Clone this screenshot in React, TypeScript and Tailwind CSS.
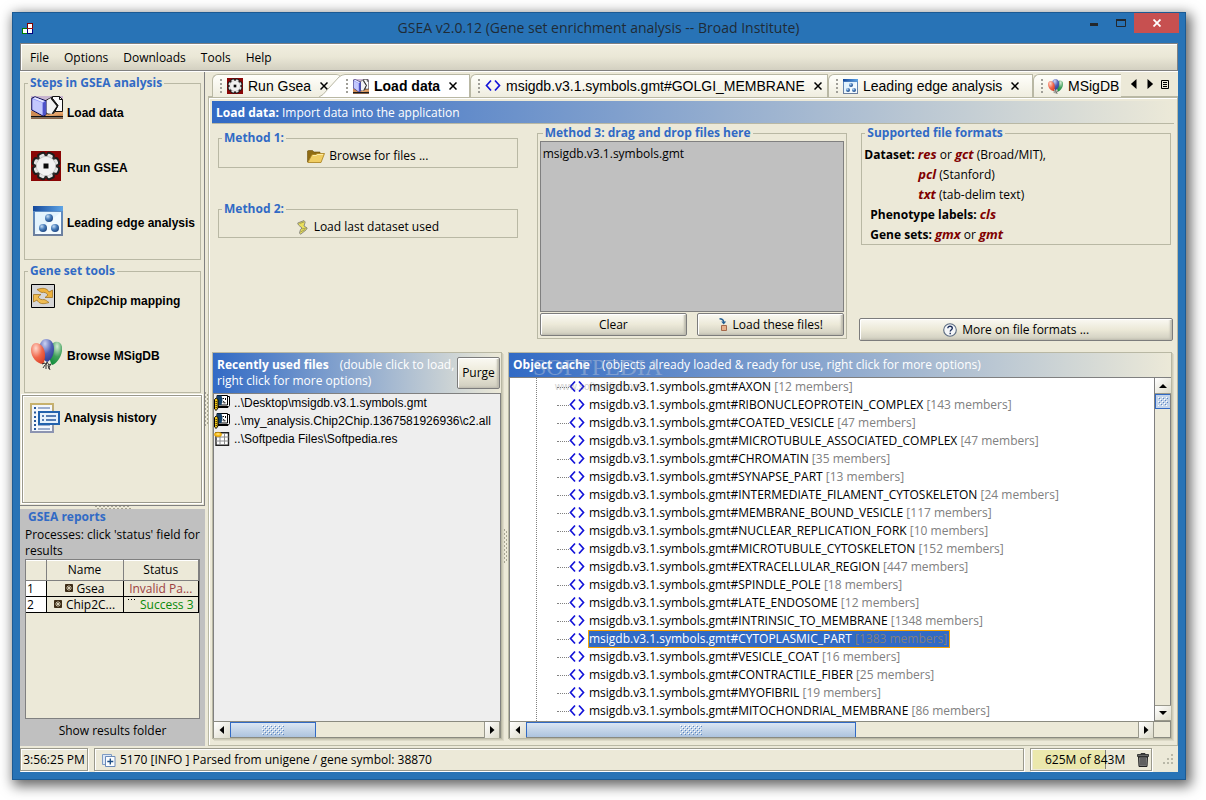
import { Fragment, type ReactNode } from "react";

const UI = "font-['Open_Sans','Noto_Sans',sans-serif]";
const ARIAL = "font-['Liberation_Sans',Arial,sans-serif]";

/* ---------- icons ---------- */

function AppIcon() {
  return (
    <svg width="11" height="11" viewBox="0 0 11 11" shapeRendering="crispEdges">
      <path d="M5.5.5h5v5h-5z" fill="#fff" stroke="#7f0000" />
      <path d="M.5 5.500h5v5h-5z" fill="#fff" stroke="#007f00" />
      <path d="M5.500 5.500h5v5h-5z" fill="#fff" stroke="#00007f" />
      <path d="M5 5.500h6" stroke="#a01010" />
    </svg>
  );
}

function BooksIcon({ width = 32, height = 23 }: { width?: number; height?: number }) {
  return (
    <svg width={width} height={height} viewBox="0 0 32 23" preserveAspectRatio="none" className="shrink-0">
      <path d="M0 0h32v16H0z" fill="#c9b6cf" />
      <path d="M0 15h32v5H0z" fill="#e5a56c" />
      <path d="M0 15l3 1 9 4h8l12-2v2H0z" fill="#b9713a" opacity=".5" />
      <path d="M0 20h32v1.500H0z" fill="#111" />
      <path d="M0 21.500h32V23H0z" fill="#8a6448" />
      <path d="M14 5l7-4 6 8-4 8-6 1-3-2z" fill="#d5d5d5" stroke="#222" />
      <path d="M21.500.5h7l3 3v12h-7.500l3-6-5.500-7z" fill="#fafafa" stroke="#111" />
      <path d="M28.500.5v3h3" fill="none" stroke="#111" />
      <path d="M15.500 17V5l4-3 7 8-6 8z" fill="#f3f3f3" />
      <path d="M20 2l6.500 8-5 7.500" fill="none" stroke="#111" strokeWidth="1.300" />
      <path d="M.8 2.200L4 .8l11 4v14l-3 1.200L.8 14z" fill="#8e93f5" stroke="#0d0d50" />
      <path d="M1.500 3l10 3.800V19L1.500 13.500z" fill="#c3c8fd" />
      <path d="M11.800 7L15 5v13.500l-3.200 1.300z" fill="#4d53c8" />
      <path d="M2 2.300L4.200 1.300 13.600 5l-2 1.200z" fill="#e8eaff" />
    </svg>
  );
}

function GearIcon({ size = 30 }: { size?: number }) {
  const teeth = [22.5, 67.5, 112.5, 157.5, 202.5, 247.5, 292.5, 337.5];
  return (
    <svg width={size} height={size} viewBox="0 0 30 30" className="shrink-0">
      <path d="M0 0h30v30H0z" fill="#8a0505" />
      {teeth.map((a) => (
        <rect key={a} x="10.500" y=".5" width="9" height="9" rx="3" fill="#1c1c1c" transform={`rotate(${a} 15 15)`} />
      ))}
      <circle cx="15" cy="15" r="12" fill="#2b2b2b" />
      {teeth.map((a) => (
        <rect key={a} x="12.300" y="2.500" width="5.400" height="6" rx="1.500" fill="#e4e4e4" transform={`rotate(${a} 15 15)`} />
      ))}
      <circle cx="15" cy="15" r="10" fill="#bdbdbd" />
      <circle cx="15" cy="15" r="9.300" fill="#f1f1f1" />
      <path d="M12.500 12.500h5v5h-5z" fill="#0a0a0a" />
    </svg>
  );
}

function LeadingEdgeIcon({ size = 30 }: { size?: number }) {
  return (
    <svg width={size} height={size} viewBox="0 0 30 30" className="shrink-0">
      <defs>
        <linearGradient id="leFrame" x1="0" y1="0" x2="0" y2="1">
          <stop offset="0" stopColor="#5a8fcc" />
          <stop offset="1" stopColor="#6d7f9c" />
        </linearGradient>
        <linearGradient id="leBar" x1="0" y1="0" x2="1" y2="0">
          <stop offset="0" stopColor="#14489a" />
          <stop offset="1" stopColor="#5fa5e6" />
        </linearGradient>
        <radialGradient id="leBall" cx=".35" cy=".3" r=".8">
          <stop offset="0" stopColor="#c4dcf3" />
          <stop offset=".45" stopColor="#4b80bd" />
          <stop offset="1" stopColor="#163d78" />
        </radialGradient>
      </defs>
      <path d="M0 0h30v30H0z" fill="url(#leFrame)" />
      <path d="M0 0h30v5H0z" fill="url(#leBar)" />
      <path d="M2 6h26v22H2z" fill="#e3f3fd" />
      <path d="M28 6v22H2z" fill="#f3fbff" />
      <circle cx="16" cy="12" r="4" fill="url(#leBall)" />
      <circle cx="10" cy="22" r="4" fill="url(#leBall)" />
      <circle cx="22" cy="22" r="4" fill="url(#leBall)" />
    </svg>
  );
}

function ChipIcon() {
  return (
    <svg width="24" height="24" viewBox="0 0 24 24">
      <path d="M.5.5h23v23H.5z" fill="#d6d6d6" stroke="#000" />
      <path d="M6 5.500c6-2 10-1.500 12 2.500l3.500-2v7.500H14l3-2.500c-1.500-2.500-4-3-6-2.500-2-.5-3.500-2-5-3z" fill="#eeb23c" stroke="#9c6c14" strokeWidth=".7" />
      <path d="M18 18.500c-6 2-10 1.500-12-2.500l-3.500 2v-7.500H10L7 13c1.500 2.500 4 3 6 2.500 2 .5 3.500 2 5 3z" fill="#f0bd52" stroke="#9c6c14" strokeWidth=".7" />
    </svg>
  );
}

function BalloonsIcon({ size = 31 }: { size?: number }) {
  return (
    <svg width={size} height={size} viewBox="0 0 31 31" className="shrink-0">
      <defs>
        <radialGradient id="bRed" cx=".35" cy=".25" r=".9">
          <stop offset="0" stopColor="#ffd9cc" />
          <stop offset=".5" stopColor="#f0664a" />
          <stop offset="1" stopColor="#d53c22" />
        </radialGradient>
        <radialGradient id="bBlue" cx=".4" cy=".2" r=".9">
          <stop offset="0" stopColor="#ccd2f2" />
          <stop offset=".5" stopColor="#4f5fb4" />
          <stop offset="1" stopColor="#26378c" />
        </radialGradient>
        <radialGradient id="bGreen" cx=".6" cy=".2" r=".9">
          <stop offset="0" stopColor="#d6ecd6" />
          <stop offset=".5" stopColor="#3fa05a" />
          <stop offset="1" stopColor="#0c8a38" />
        </radialGradient>
      </defs>
      <path d="M24 3c5-1 8 3 7 9-1 7-6 13-10 14-2-3-3-8-2-13 0-6 2-9 5-10z" fill="url(#bGreen)" />
      <path d="M15 0c5 0 8 4 8 10 0 7-4 12-7 13-4-2-8-7-8-13 0-5 3-10 7-10z" fill="url(#bBlue)" />
      <path d="M5 4c5 0 9 5 9 12 0 4-1 8-2 9C6 25 0 18 0 11c0-4 2-7 5-7z" fill="url(#bRed)" />
      <path d="M11 25l3-1 1 2 1-3 2 3 2-1-2 3 1 3M14 26l-2 3M15 26v4M17 26l1 4" fill="none" stroke="#333" strokeWidth="1" />
    </svg>
  );
}

function HistoryIcon() {
  return (
    <svg width="30" height="30" viewBox="0 0 30 30">
      <defs>
        <linearGradient id="hFrame" x1="0" y1="0" x2="0" y2="1">
          <stop offset="0" stopColor="#c9b26a" />
          <stop offset="1" stopColor="#8a93b4" />
        </linearGradient>
      </defs>
      <path d="M0 0h24v30H0z" fill="url(#hFrame)" />
      <path d="M2 2h20v26H2z" fill="#f3f7fc" />
      <path d="M4 5h2M4 9.500h2M4 14h2M4 18h2M4 22h2M4 26h2" stroke="#27579b" strokeWidth="2" />
      <path d="M8 5h12M8 9.500h8M8 22h12M8 26h12" stroke="#8097be" strokeWidth="1.500" />
      <path d="M9 9h20v12H9z" fill="#e6f1fb" stroke="#2262ad" strokeWidth="2" />
      <path d="M12 13h2M12 17h2M16 13h10M16 17h10" stroke="#27579b" strokeWidth="1.500" />
    </svg>
  );
}

function AngleIcon({ size = 16 }: { size?: number }) {
  return (
    <svg width={size} height={size} viewBox="0 0 16 16" className="shrink-0">
      <path d="M6 2.500L1.500 7.500l4.500 5M10 2.500l4.500 5-4.500 5" fill="none" stroke="#1414d8" strokeWidth="1.700" />
    </svg>
  );
}

function FolderIcon() {
  return (
    <svg width="18" height="13" viewBox="0 0 18 13">
      <path d="M.5 12V1L1.500.5h4L7 2h6v3H5z" fill="#8f6c14" stroke="#6d500c" strokeWidth=".6" />
      <path d="M.8 12.500L5 4.500h4l1-1h7.500L14 12.500z" fill="#f0cd62" stroke="#a77f1c" strokeWidth=".8" />
      <path d="M6 5.500h3.500l1-1H16" fill="none" stroke="#fbeaa6" />
    </svg>
  );
}

function ScrollIcon() {
  return (
    <svg width="11" height="15" viewBox="0 0 11 15">
      <path d="M.7 3L7 .6 8.200 2 7 6l3.200 2L9 10 3.500 14.300 2.500 13l1-3.500L5 8 1.500 5z" fill="#e9df5c" stroke="#777" strokeWidth=".8" />
      <path d="M2.500 3.500L7 2M4.500 9l5-1M3.500 12L8 9.500" stroke="#8d8a4c" strokeWidth=".7" />
    </svg>
  );
}

function LoadArrowIcon() {
  return (
    <svg width="9" height="13" viewBox="0 0 9 13">
      <path d="M.5.8c2.500 0 4 1 4.200 3.200" fill="none" stroke="#245f93" strokeWidth="1.400" />
      <path d="M2.200 3.600h5L4.700 6.600z" fill="#245f93" />
      <path d="M2.500 7.500h5v5h-5z" fill="#e5b08a" stroke="#a5684a" />
    </svg>
  );
}

function HelpIcon() {
  return (
    <svg width="14" height="14" viewBox="0 0 14 14">
      <circle cx="7" cy="7" r="6.300" fill="#f4f6f8" stroke="#5b6b80" strokeWidth="1.100" />
      <path d="M4.800 5.300c0-2.800 4.500-2.600 4.500-.1 0 1.500-2.100 1.600-2.100 3.300M7.200 9.800v1.500" fill="none" stroke="#1c2f5c" strokeWidth="1.400" />
    </svg>
  );
}

function BookFileIcon() {
  return (
    <svg width="16" height="16" viewBox="0 0 16 16" className="shrink-0">
      <path d="M4 1.500h11.500v9l-1.500 2H4z" fill="#fff" stroke="#000" />
      <path d="M3 .5h10.500v9.500H3z" fill="#fff" stroke="#000" />
      <path d="M3 .5h4.500L8.500 5l-1 5H3z" fill="#123f66" />
      <path d="M8.500 3.500h1.500M11.500 3v2M9 7.500l1-1.500M9.500 7.800h2" fill="none" stroke="#000" />
      <path d="M4 11.500h10" stroke="#000" />
      <path d="M.5 4.500L2.200 3 4 4.500V13l-1.800 2.500L.5 14z" fill="#f4c916" stroke="#000" />
      <path d="M1.500 6.500h1.500M1.500 8.500h1.500M1.500 10.500h1.500M1.500 12.500h1.500" stroke="#5b4700" />
    </svg>
  );
}

function GridFileIcon() {
  return (
    <svg width="16" height="16" viewBox="0 0 16 16" className="shrink-0">
      <path d="M2 1.700h12.500v12.500H2z" fill="#fff" stroke="#222" strokeWidth="1.400" />
      <path d="M2 6h12.500M2 10h12.500M6 2v12M10.500 2v12" stroke="#8a8a8a" />
      <ellipse cx="4" cy="3.500" rx="3.700" ry="2.200" fill="#f9bc14" stroke="#c88c00" strokeWidth=".6" />
      <path d="M2.500 3h3" stroke="#fff3b0" />
    </svg>
  );
}

function StarBoxIcon() {
  return (
    <svg width="8" height="8" viewBox="0 0 8 8" className="shrink-0">
      <path d="M.5.5h7v7h-7z" fill="#3d2c16" stroke="#3d2c16" />
      <path d="M4 1v6M1 4h6M2 2l4 4M6 2L2 6" stroke="#e3dcc4" strokeWidth=".8" />
    </svg>
  );
}

function PlusPageIcon() {
  return (
    <svg width="14" height="13" viewBox="0 0 14 13" className="shrink-0">
      <path d="M.5.5h9v10h-9z" fill="#dfe9f6" stroke="#7f9cc4" />
      <path d="M3.500 2.500h9.500v10H3.500z" fill="#fbfdff" stroke="#6a8ab8" />
      <path d="M8.300 4.500v6M5.300 7.500h6" stroke="#1f4f86" strokeWidth="1.400" />
    </svg>
  );
}

function TrashIcon() {
  return (
    <svg width="12" height="14" viewBox="0 0 12 14">
      <path d="M4 1.500V.5h4v1" fill="none" stroke="#333" />
      <path d="M.5 1.500h11v2H.5z" fill="#666" stroke="#222" strokeWidth=".8" />
      <path d="M1.500 4h9l-.5 9.500H2z" fill="#8c8c8c" stroke="#222" />
      <path d="M4 5v7.500M6 5v7.500M8 5v7.500" stroke="#2a2a2a" strokeWidth=".9" />
    </svg>
  );
}

function CloseGlyph() {
  return (
    <svg width="8" height="8" viewBox="0 0 8 8">
      <path d="M.5.5l7 7M7.500.5l-7 7" stroke="#000" strokeWidth="1.500" />
    </svg>
  );
}

function Arrow({ dir, big }: { dir: "left" | "right" | "up" | "down"; big?: boolean }) {
  const d = {
    left: "M6 0v8L1.500 4z",
    right: "M2 0v8l4.500-4z",
    up: "M0 6h8L4 2z",
    down: "M0 2h8L4 6z",
  }[dir];
  return (
    <svg width={big ? 10 : 8} height={big ? 10 : 8} viewBox="0 0 8 8">
      <path d={d} fill="#000" />
    </svg>
  );
}

function ThumbDots({ width = 22, height = 10 }: { width?: number; height?: number }) {
  return (
    <svg width={width} height={height}>
      <defs>
        <pattern id="thumbDots" width="4" height="4" patternUnits="userSpaceOnUse">
          <path d="M0 0h1v1H0zM2 2h1v1H2z" fill="#fff" />
          <path d="M1 1h1v1H1zM3 3h1v1H3z" fill="#5b86c4" />
        </pattern>
      </defs>
      <rect width={width} height={height} fill="url(#thumbDots)" />
    </svg>
  );
}

function Grip({ vertical }: { vertical?: boolean }) {
  return vertical ? (
    <svg width="3" height="34" className="shrink-0">
      <path d="M.5 0v34M2.500 2v32" stroke="#a5a391" strokeDasharray="2 2" />
    </svg>
  ) : (
    <svg width="36" height="3" className="shrink-0">
      <path d="M0 .5h36M2 2.500h34" stroke="#a5a391" strokeDasharray="2 2" />
    </svg>
  );
}

/* ---------- shared parts ---------- */

function Group({ title, className = "", children }: { title: string; className?: string; children: ReactNode }) {
  return (
    <fieldset className={`min-w-0 border border-[#b9b8a4] ${className}`}>
      <legend className="ml-[3px] px-[2px] text-[12px] leading-4 font-bold text-[#316ac5]">{title}</legend>
      {children}
    </fieldset>
  );
}

const metalButton =
  "flex items-center justify-center rounded-[2px] border border-[#7c7c7c] bg-linear-to-b/srgb from-[#faf9f3] via-[#ece9d8] to-[#cfcdbf] shadow-[inset_1px_1px_0_#fff,inset_-2px_-1px_2px_#bdbbae]";

const scrollButton =
  "flex h-4 w-4 shrink-0 items-center justify-center border border-[#9a998c] bg-linear-to-br/srgb from-white to-[#dcdac9]";

function HScroll({ thumb, tail }: { thumb: string; tail?: boolean }) {
  return (
    <div className="flex h-[17px] shrink-0 border border-[#8a8a80] bg-[#ece9d8]">
      <button aria-label="Scroll left" className={`${scrollButton} border-0`}>
        <Arrow dir="left" />
      </button>
      <div className="flex flex-1">
        <div className={`flex items-center justify-center border border-b-0 border-[#316ac5] bg-linear-to-b/srgb from-[#dbe6f3] to-[#adc3de] ${thumb}`}>
          <ThumbDots />
        </div>
      </div>
      <button aria-label="Scroll right" className={`${scrollButton} border-y-0`}>
        <Arrow dir="right" />
      </button>
      {tail && <div className="w-4 shrink-0" />}
    </div>
  );
}

function SideItem({ icon, label }: { icon: ReactNode; label: string }) {
  return (
    <button className="flex h-[55px] items-start pl-[6px] text-left">
      <span className="flex h-8 w-[36px] shrink-0 items-start">{icon}</span>
      <span className={`leading-[34px] font-bold whitespace-nowrap ${ARIAL}`}>{label}</span>
    </button>
  );
}

/* ---------- window parts ---------- */

function TitleBar() {
  return (
    <header className="flex h-[30px] shrink-0 items-center pr-[6px] pl-[9px]">
      <AppIcon />
      <h1 className="flex-1 pl-[84px] text-center text-[14px] leading-5 text-[#1f2b36]">
        GSEA v2.0.12 (Gene set enrichment analysis -- Broad Institute)
      </h1>
      <div className="flex h-full items-start">
        <button aria-label="Minimize" className="flex h-[20px] w-[27px] items-center justify-center">
          <svg width="8" height="8">
            <path d="M0 5.500h8" stroke="#23272c" strokeWidth="3" />
          </svg>
        </button>
        <button aria-label="Maximize" className="flex h-[20px] w-[27px] items-center justify-center">
          <svg width="10" height="8">
            <path d="M.5 0v7.500h9V0" fill="none" stroke="#23272c" />
            <path d="M0 1h10" stroke="#23272c" strokeWidth="2" />
          </svg>
        </button>
        <button aria-label="Close" className="flex h-[20px] w-[45px] items-center justify-center bg-[#c75050]">
          <svg width="8" height="8" viewBox="0 0 8 8">
            <path d="M.5.5l7 7M7.500.5l-7 7" stroke="#fff" strokeWidth="1.800" />
          </svg>
        </button>
      </div>
    </header>
  );
}

function MenuBar() {
  return (
    <nav className="flex h-[28px] shrink-0 items-center gap-[15px] border border-[#808080] bg-linear-to-b/srgb from-[#f1eee0] via-[#eae7d6] to-[#d3d0c1] pt-px pl-[9px] shadow-[inset_1px_1px_0_#fff]">
      {["File", "Options", "Downloads", "Tools", "Help"].map((m) => (
        <button key={m}>{m}</button>
      ))}
    </nav>
  );
}

const runs = [
  { n: 1, name: "Gsea", status: "Invalid Pa...", tone: "text-[#9c4040]" },
  { n: 2, name: "Chip2C...", status: "Success 3", tone: "text-[#0a8a0a]" },
];

function Reports() {
  return (
    <section className="flex flex-1 flex-col bg-[#c0c0c0] px-[5px] pb-[7px]">
      <h2 className="pl-[3px] font-bold text-[#316ac5]">GSEA reports</h2>
      <p className="pt-[2px]">Processes: click 'status' field for results</p>
      <div className="flex-1 border border-[#808080] bg-[#ece9d8]">
        <table className="w-full table-fixed border-collapse text-center">
          <thead>
            <tr className="h-[20px] border-b border-[#808080] shadow-[inset_0_1px_0_#fff]">
              <th className="w-[20px] border-r border-[#808080]" />
              <th className="w-[77px] border-r border-[#808080] font-normal">Name</th>
              <th className="border-r border-[#808080] font-normal">Status</th>
            </tr>
          </thead>
          <tbody>
            {runs.map((r) => (
              <tr key={r.n} className="h-4 leading-[15px]">
                <td className="border-r border-b border-black bg-white pl-px text-left">{r.n}</td>
                <td className="border-r border-b border-black whitespace-nowrap">
                  <span className="flex items-center justify-center gap-1">
                    <StarBoxIcon />
                    {r.name}
                  </span>
                </td>
                <td className={`border-r border-b border-black whitespace-nowrap ${r.tone}`}>
                  <span className="flex justify-center gap-1">
                    {r.n === 2 && (
                      <svg width="8" height="4">
                        <path d="M0 2.500h8" stroke="#000" strokeDasharray="1 2" />
                      </svg>
                    )}
                    {r.status}
                  </span>
                </td>
              </tr>
            ))}
          </tbody>
        </table>
      </div>
      <button className="mt-1 h-4 w-full">Show results folder</button>
    </section>
  );
}

function Sidebar() {
  return (
    <aside className="flex w-[185px] shrink-0 flex-col">
      <div className="flex flex-col gap-[2px] border-r border-b border-[#808080] px-[2px] pt-[3px] pb-[2px]">
        <div className="flex flex-col gap-[3px] px-[2px]">
          <Group title="Steps in GSEA analysis" className="h-[185px] w-[177px]">
            <div className="flex flex-col pt-[5px]">
              <SideItem icon={<BooksIcon />} label="Load data" />
              <SideItem icon={<GearIcon />} label="Run GSEA" />
              <SideItem
                icon={
                  <span className="pl-[2px]">
                    <LeadingEdgeIcon />
                  </span>
                }
                label="Leading edge analysis"
              />
            </div>
          </Group>
          <Group title="Gene set tools" className="h-[130px] w-[177px]">
            <div className="flex flex-col pt-[5px]">
              <SideItem icon={<ChipIcon />} label="Chip2Chip mapping" />
              <SideItem icon={<BalloonsIcon />} label="Browse MSigDB" />
            </div>
          </Group>
        </div>
        <div className="h-[108px] border border-[#9a998c] bg-[#ece9d8] px-[7px] py-[7px] shadow-[inset_1px_1px_0_#fff,0_0_0_1px_#fff]">
          <button className="flex items-center gap-1">
            <HistoryIcon />
            <span className={`font-bold ${ARIAL}`}>Analysis history</span>
          </button>
        </div>
      </div>
      <div className="flex h-[3px] justify-center">
        <Grip />
      </div>
      <Reports />
    </aside>
  );
}

function TabBody({ icon, label, close = true, bold }: { icon: ReactNode; label: string; close?: boolean; bold?: boolean }) {
  return (
    <>
      <svg width="2" height="14" className="shrink-0">
        <path d="M1 0v14" stroke="#a09f98" strokeWidth="2" strokeDasharray="2 2" />
      </svg>
      {icon}
      <span className={`text-[14px] leading-5 whitespace-nowrap ${bold ? "font-bold" : ""}`}>{label}</span>
      {close && (
        <span className="pl-[4px]">
          <CloseGlyph />
        </span>
      )}
    </>
  );
}

const tabBase = "flex h-[23px] items-center gap-[5px] rounded-tl-[6px] border border-b-0 border-[#b9b8a4]";
const tabIdle = "bg-linear-to-b/srgb from-[#fffffb] to-[#efeddf]";

function Tabs() {
  return (
    <div className={`flex h-[25px] shrink-0 items-start border-b border-[#b9b8a4] pl-1 ${ARIAL}`}>
      <div role="tablist" className="flex min-w-0 flex-1 overflow-hidden pt-[2px]">
        <button role="tab" className={`${tabBase} ${tabIdle} w-[130px] shrink-0 rounded-tr-[6px] border-r-0 pl-[7px]`}>
          <TabBody icon={<GearIcon size={16} />} label="Run Gsea" />
        </button>
        <button role="tab" aria-selected="true" className="-ml-[24px] flex h-[23px] w-[152px] shrink-0 items-stretch">
          <svg width="27" height="23" className="shrink-0">
            <path d="M1 23l4-2.500L21 3q3-3 6-3v23z" fill="#fff" />
            <path d="M1 23l4-2.500L21 3q3-2.500 6-2.500" fill="none" stroke="#b9b8a4" />
          </svg>
          <span className="flex flex-1 items-center gap-[5px] border-t border-r border-[#b9b8a4] bg-white pl-px">
            <TabBody icon={<BooksIcon width={16} height={15} />} label="Load data" bold />
          </span>
        </button>
        <button role="tab" className={`${tabBase} ${tabIdle} w-[358px] shrink-0 pl-[7px]`}>
          <TabBody icon={<AngleIcon />} label="msigdb.v3.1.symbols.gmt#GOLGI_MEMBRANE" />
        </button>
        <button role="tab" className={`${tabBase} ${tabIdle} w-[205px] shrink-0 pl-[7px]`}>
          <TabBody icon={<LeadingEdgeIcon size={15} />} label="Leading edge analysis" />
        </button>
        <button role="tab" className={`${tabBase} ${tabIdle} min-w-0 flex-1 border-r-0 pl-[7px]`}>
          <TabBody icon={<BalloonsIcon size={15} />} label="MSigDB" close={false} />
        </button>
      </div>
      <div className="flex h-[24px] items-center gap-[6px] pr-[8px] pl-[8px]">
        <button aria-label="Previous tabs">
          <Arrow dir="left" big />
        </button>
        <button aria-label="Next tabs">
          <Arrow dir="right" big />
        </button>
        <button aria-label="Tab list">
          <svg width="9" height="9">
            <path d="M.5.5h7v8h-7zM2 2.500h4M2 4.500h4M2 6.500h4" fill="none" stroke="#000" />
          </svg>
        </button>
      </div>
    </div>
  );
}

function Fmt({ children }: { children: ReactNode }) {
  return <em className="text-[13px] font-bold text-[#800000]">{children}</em>;
}

function LoadForm() {
  return (
    <div className="grid h-[228px] shrink-0 grid-cols-3">
      <div className="flex flex-col gap-[33px] pt-[6px] pr-[15px] pl-[6px]">
        <Group title="Method 1:" className="h-[38px]">
          <button className="flex h-[20px] w-full items-center justify-center gap-1">
            <FolderIcon />
            Browse for files ...
          </button>
        </Group>
        <Group title="Method 2:" className="h-[37px]">
          <button className="flex h-[20px] w-full items-center justify-center gap-[6px]">
            <ScrollIcon />
            Load last dataset used
          </button>
        </Group>
      </div>
      <div className="pt-px pr-[6px] pl-[4px]">
        <Group title="Method 3: drag and drop files here" className="flex h-[214px] flex-col px-[2px]">
          <ul className="h-[171px] border border-[#808080] bg-[#c0c0c0] px-[2px] py-1">
            <li>msigdb.v3.1.symbols.gmt</li>
          </ul>
          <div className="flex gap-[10px] pt-px">
            <button className={`h-[23px] flex-1 ${metalButton}`}>Clear</button>
            <button className={`h-[23px] flex-1 gap-[5px] ${metalButton}`}>
              <LoadArrowIcon />
              Load these files!
            </button>
          </div>
        </Group>
      </div>
      <div className="flex flex-col justify-between pt-px pr-px pb-[11px] pl-[6px]">
        <Group title="Supported file formats" className="mr-[2px] ml-[2px] h-[120px]">
          <div className="flex flex-col pt-[3px] pl-[2px] whitespace-nowrap *:h-5 *:leading-5">
            <p>
              <b>Dataset:</b> <Fmt>res</Fmt> or <Fmt>gct</Fmt> (Broad/MIT),
            </p>
            <p className="pl-[54px]">
              <Fmt>pcl</Fmt> (Stanford)
            </p>
            <p className="pl-[54px]">
              <Fmt>txt</Fmt> (tab-delim text)
            </p>
            <p className="pl-[6px]">
              <b>Phenotype labels:</b> <Fmt>cls</Fmt>
            </p>
            <p className="pl-[6px]">
              <b>Gene sets:</b> <Fmt>gmx</Fmt> or <Fmt>gmt</Fmt>
            </p>
          </div>
        </Group>
        <button className={`h-[23px] gap-[5px] ${metalButton}`}>
          <HelpIcon />
          More on file formats ...
        </button>
      </div>
    </div>
  );
}

const headerGradient = "bg-linear-to-r/srgb from-[#316ac5] to-[#ece9d8] text-white";

const panel = "border border-[#b9b8a4] shadow-[1px_1px_0_#cfccb9,2px_2px_0_#dddac8]";

const recent = [
  { icon: <BookFileIcon />, path: "..\\Desktop\\msigdb.v3.1.symbols.gmt" },
  { icon: <BookFileIcon />, path: "..\\my_analysis.Chip2Chip.1367581926936\\c2.all" },
  { icon: <GridFileIcon />, path: "..\\Softpedia Files\\Softpedia.res" },
];

function RecentFiles() {
  return (
    <section className={`flex w-[290px] shrink-0 flex-col ${panel}`}>
      <div className={`flex h-[40px] shrink-0 items-center ${headerGradient}`}>
        <p className="flex-1 pl-1 whitespace-nowrap">
          <b>Recently used files</b>
          <span className="pl-[11px]">(double click to load,</span>
          <br />
          right click for more options)
        </p>
        <button className={`mr-px h-[32px] w-[43px] text-black ${metalButton}`}>Purge</button>
      </div>
      <ul className="min-h-0 flex-1 overflow-hidden border border-b-0 border-[#808080] bg-[#eee]">
        {recent.map((f) => (
          <li key={f.path} className={`flex h-[18px] items-center gap-1 text-[12px] whitespace-nowrap ${ARIAL}`}>
            {f.icon}
            {f.path}
          </li>
        ))}
      </ul>
      <HScroll thumb="w-[86px]" />
    </section>
  );
}

const sets: [string, number][] = [
  ["AXON", 12],
  ["RIBONUCLEOPROTEIN_COMPLEX", 143],
  ["COATED_VESICLE", 47],
  ["MICROTUBULE_ASSOCIATED_COMPLEX", 47],
  ["CHROMATIN", 35],
  ["SYNAPSE_PART", 13],
  ["INTERMEDIATE_FILAMENT_CYTOSKELETON", 24],
  ["MEMBRANE_BOUND_VESICLE", 117],
  ["NUCLEAR_REPLICATION_FORK", 10],
  ["MICROTUBULE_CYTOSKELETON", 152],
  ["EXTRACELLULAR_REGION", 447],
  ["SPINDLE_POLE", 18],
  ["LATE_ENDOSOME", 12],
  ["INTRINSIC_TO_MEMBRANE", 1348],
  ["CYTOPLASMIC_PART", 1383],
  ["VESICLE_COAT", 16],
  ["CONTRACTILE_FIBER", 25],
  ["MYOFIBRIL", 19],
  ["MITOCHONDRIAL_MEMBRANE", 86],
];
const selected = "CYTOPLASMIC_PART";

function ObjectCache() {
  return (
    <section className={`relative flex min-w-0 flex-1 flex-col ${panel}`}>
      <div className={`flex h-[24px] shrink-0 items-center pl-1 whitespace-nowrap ${headerGradient}`}>
        <b>Object cache</b>
        <span className="pl-[12px]">(objects already loaded &amp; ready for use, right click for more options)</span>
      </div>
      <div className="flex min-h-0 flex-1 border border-b-0 border-[#808080] bg-white">
        <div className="ml-[26px] border-l border-dotted border-[#808080]" />
        <ul className="min-w-0 flex-1 overflow-hidden pl-[20px]">
          {sets.map(([name, count]) => (
            <li key={name} className="flex h-[18px] items-center whitespace-nowrap">
              <span className="w-[12px] border-t border-dotted border-[#808080]" />
              <AngleIcon />
              <button
                className={
                  name === selected
                    ? "ml-[3px] h-[18px] border border-[#f5a300] bg-[#316ac5] pr-[2px] leading-4 text-white"
                    : "ml-1 h-[18px]"
                }
              >
                msigdb.v3.1.symbols.gmt#{name} <span className="text-[#808080]">[{count} members]</span>
              </button>
            </li>
          ))}
        </ul>
        <div className="flex w-4 shrink-0 flex-col border-l border-[#808080] bg-[#ece9d8]">
          <button aria-label="Scroll up" className={`${scrollButton} border-x-0 border-t-0`}>
            <Arrow dir="up" />
          </button>
          <div className="flex h-[15px] items-center justify-center border border-r-0 border-[#316ac5] bg-[#c3d4ea]">
            <ThumbDots width={10} height={9} />
          </div>
          <div className="flex-1" />
          <button aria-label="Scroll down" className={`${scrollButton} border-x-0`}>
            <Arrow dir="down" />
          </button>
        </div>
      </div>
      <HScroll thumb="w-[330px]" tail />
      <div className="pointer-events-none absolute top-[2px] left-[24px] font-['Liberation_Serif',serif] text-[24px] leading-6 text-[#c8d0dc] opacity-40">
        SOFTPEDIA<sup className="text-[8px]">™</sup>
        <p className={`pt-[2px] pl-[22px] text-[10px] leading-3 text-[#888] ${ARIAL}`}>www.softpedia.com</p>
      </div>
    </section>
  );
}

function StatusBar() {
  const cell = "flex h-[23px] items-center border border-[#9a998c] shadow-[inset_1px_1px_0_#fff,1px_1px_0_#fff]";
  return (
    <footer className="flex shrink-0 gap-[6px] pt-[2px] pb-px whitespace-nowrap">
      <div className={`${cell} w-[68px] justify-center pt-px`}>3:56:25 PM</div>
      <div className={`${cell} min-w-0 flex-1 gap-[4px] pt-px pl-[7px]`}>
        <PlusPageIcon />
        5170 [INFO ] Parsed from unigene / gene symbol: 38870
      </div>
      <div className={`${cell} w-[122px] pr-[2px] pl-px`}>
        <div className="flex h-[19px] flex-1 items-center pl-px">
          <div className="flex h-[19px] w-[73px] items-center border-r border-[#808080] bg-[#ebe8ad] pt-px pl-[12px] whitespace-nowrap">
            625M of 843M
          </div>
        </div>
        <button aria-label="Run garbage collector">
          <TrashIcon />
        </button>
      </div>
      <div className="flex w-[20px] items-center justify-center">
        <svg width="11" height="11">
          <path d="M8 0h2v2H8zM4 4h2v2H4zM8 4h2v2H8zM0 8h2v2H0zM4 8h2v2H4zM8 8h2v2H8z" fill="#b9b8a8" />
        </svg>
      </div>
    </footer>
  );
}

export default function App() {
  const panes = [
    { id: "recent", node: <RecentFiles /> },
    { id: "cache", node: <ObjectCache /> },
  ];
  return (
    <div className={`flex min-h-screen flex-col bg-white pt-3 pr-5 pb-5 pl-3 text-[12px] leading-4 text-black ${UI}`}>
      <div className="flex flex-1 flex-col border border-[#1c5a93] bg-[#2873b6] shadow-[3px_4px_12px_2px_rgba(0,0,0,0.6)]">
        <TitleBar />
        <div className="mx-[7px] mb-[7px] flex flex-1 flex-col bg-[#ece9d8]">
          <MenuBar />
          <div className="flex flex-1 border-t border-white">
            <Sidebar />
            <div className="flex w-[3px] shrink-0 items-center">
              <Grip vertical />
            </div>
            <main className="flex min-w-0 flex-1 flex-col">
              <Tabs />
              <div className="flex flex-1 flex-col border border-[#b9b8a4] px-[3px] pt-[3px] pb-[6px] shadow-[inset_1px_1px_0_#fff]">
                <div className={`flex h-[23px] shrink-0 items-center border-b border-[#b9b8a4] pt-px pl-1 ${headerGradient}`}>
                  <p>
                    <b>Load data:</b> Import data into the application
                  </p>
                </div>
                <LoadForm />
                <div className="flex flex-1 pr-[2px]">
                  {panes.map((p, i) => (
                    <Fragment key={p.id}>
                      {i > 0 && (
                        <div className="flex w-[6px] shrink-0 items-center justify-center">
                          <Grip vertical />
                        </div>
                      )}
                      {p.node}
                    </Fragment>
                  ))}
                </div>
              </div>
            </main>
          </div>
          <StatusBar />
        </div>
      </div>
    </div>
  );
}
